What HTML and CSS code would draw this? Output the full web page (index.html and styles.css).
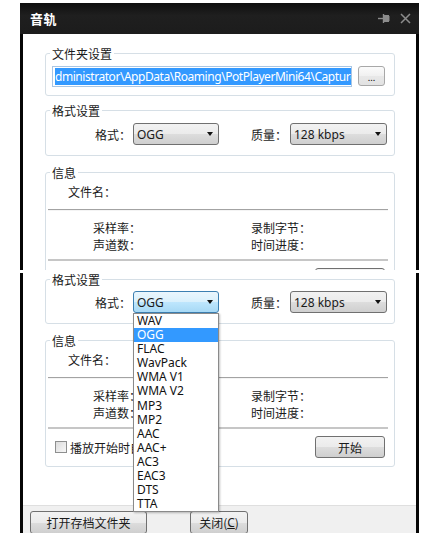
FILE: index.html
```html
<!DOCTYPE html>
<html lang="zh-CN">
<head>
<meta charset="utf-8">
<title>音轨</title>
<link rel="stylesheet" href="styles.css">
</head>
<body>
<div class="frame">
  <section class="panel panel-top">
    <header class="titlebar">
      <span class="title">音轨</span>
      <span class="tb-icons">
        <svg class="ic-pin" width="13" height="11" viewBox="0 0 13 11"><path d="M0 5.5H5" stroke="#8c8c8c" stroke-width="1.4"/><path d="M5.5 1V10" stroke="#8c8c8c" stroke-width="1.4"/><rect x="6" y="2" width="5" height="7" fill="#8c8c8c"/><path d="M11 3V8" stroke="#8c8c8c" stroke-width="1"/></svg>
        <svg class="ic-x" width="11" height="11" viewBox="0 0 11 11"><path d="M1 1L10 10M10 1L1 10" stroke="#8c8c8c" stroke-width="1.5"/></svg>
      </span>
    </header>
    <div class="body">
      <div class="group g-folder">
        <div class="legend">文件夹设置</div>
        <div class="path-row">
          <div class="path-input"><span class="sel">dministrator\AppData\Roaming\PotPlayerMini64\Capture</span></div>
          <div class="btn btn-dots">...</div>
        </div>
      </div>
      <div class="group g-format">
        <div class="legend">格式设置</div>
        <div class="combo-row">
          <span class="lbl">格式：</span>
          <div class="combo combo-fmt"><span>OGG</span><i class="arrow"></i></div>
          <span class="lbl lbl-q">质量：</span>
          <div class="combo combo-q"><span>128 kbps</span><i class="arrow"></i></div>
        </div>
      </div>
      <div class="group g-info">
        <div class="legend">信息</div>
        <div class="file-row">文件名：</div>
        <div class="sep sep1"></div>
        <div class="stats">
          <span>采样率：</span><span>录制字节：</span>
          <span>声道数：</span><span>时间进度：</span>
        </div>
        <div class="sep sep2"></div>
        <div class="start-row">
          <label class="chk"><i class="box"></i><span>播放开始时自动录制</span></label>
          <div class="btn btn-start">开始</div>
        </div>
      </div>
    </div>
  </section>

  <section class="panel panel-bottom">
    <div class="group g-format g-format2">
      <div class="legend">格式设置</div>
      <div class="combo-row">
        <span class="lbl">格式：</span>
        <div class="combo-wrap">
          <div class="combo combo-fmt focused"><span>OGG</span><i class="arrow"></i></div>
          <ul class="dropdown">
            <li>WAV</li>
            <li class="hl">OGG</li>
            <li>FLAC</li>
            <li>WavPack</li>
            <li>WMA V1</li>
            <li>WMA V2</li>
            <li>MP3</li>
            <li>MP2</li>
            <li>AAC</li>
            <li>AAC+</li>
            <li>AC3</li>
            <li>EAC3</li>
            <li>DTS</li>
            <li>TTA</li>
          </ul>
        </div>
        <span class="lbl lbl-q">质量：</span>
        <div class="combo combo-q"><span>128 kbps</span><i class="arrow"></i></div>
      </div>
    </div>
    <div class="group g-info">
      <div class="legend">信息</div>
      <div class="file-row">文件名：</div>
      <div class="sep sep1"></div>
      <div class="stats">
        <span>采样率：</span><span>录制字节：</span>
        <span>声道数：</span><span>时间进度：</span>
      </div>
      <div class="sep sep2"></div>
      <div class="start-row">
        <label class="chk"><i class="box"></i><span>播放开始时自动录制</span></label>
        <div class="btn btn-start">开始</div>
      </div>
    </div>
    <footer class="footer">
      <div class="btn btn-open">打开存档文件夹</div>
      <div class="btn btn-close">关闭(<u>C</u>)</div>
    </footer>
  </section>
</div>
</body>
</html>
```

FILE: styles.css
```css
* { box-sizing: border-box; }
html, body { margin: 0; padding: 0; background: #fff; }
body { width: 424px; height: 533px; overflow: hidden; }

.frame {
  margin-left: 20px;
  width: 399px;
  font-family: "Noto Sans", "Noto Sans CJK SC", sans-serif;
  font-size: 12px;
  color: #1a1a1a;
}

.panel { overflow: hidden; background: #fff; }
.panel-top { margin-top: 3px; height: 267px; display: flex; flex-direction: column; }
.panel-bottom {
  margin-top: 3px;
  height: 260px;
  position: relative;
  border-left: 3px solid #060606;
  border-right: 3px solid #060606;
}

.titlebar {
  height: 31px;
  flex: none;
  background: linear-gradient(#0e0e0e, #1f1f1f 40%, #1c1c1c);
  display: flex;
  align-items: center;
  justify-content: space-between;
  padding: 0 8px 0 10px;
}
.title { color: #fff; font-weight: bold; font-size: 13px; font-family: "Noto Sans CJK SC", sans-serif; letter-spacing: 0.5px; }
.tb-icons { display: flex; align-items: center; gap: 9px; }

.body {
  flex: 1;
  border-left: 3px solid #060606;
  border-right: 3px solid #060606;
  background: #fff;
}

.group {
  border: 1px solid #d6dfe6;
  border-radius: 3px;
  margin: 0 21px 0 22px;
}
.legend {
  display: table;
  margin: -8px 0 0 4px;
  padding: 0 2px;
  background: #fff;
  line-height: 16px;
  font-family: "Noto Sans CJK SC", sans-serif;
}

.g-folder { margin-top: 19px; }
.path-row { display: flex; margin: 4px 0 8px 6px; }
.path-input {
  width: 300px;
  height: 21px;
  border: 1px solid #a9c6e4;
  padding: 1px 2px;
  overflow: hidden;
  white-space: nowrap;
  background: #fff;
}
.sel {
  display: inline-block;
  background: #3399ff;
  color: #fff;
  font-size: 12px;
  line-height: 17px;
  letter-spacing: -0.45px;
}

.btn {
  border: 1px solid #707070;
  border-radius: 3px;
  background: linear-gradient(#f2f2f2 0%, #ebebeb 50%, #dddddd 51%, #cfcfcf 100%);
  display: flex;
  align-items: center;
  justify-content: center;
  font-family: "Noto Sans CJK SC", sans-serif;
  color: #1a1a1a;
}
.btn-dots {
  margin-left: 6px;
  width: 27px;
  height: 20px;
  border-color: #a8a8a8;
  background: linear-gradient(#fbfbfb, #f0f0f0 50%, #e8e8e8 51%, #e2e2e2);
  font-size: 9px;
  line-height: 1;
  padding-top: 2px;
}

.g-format { margin-top: 14px; }
.combo-row { display: flex; align-items: center; margin: 4px 0 10px 49px; }
.lbl { width: 36px; font-family: "Noto Sans CJK SC", sans-serif; white-space: nowrap; }
.lbl-q { margin-left: 32px; }
.combo {
  height: 22px;
  border: 1px solid #707070;
  border-radius: 3px;
  background: linear-gradient(#f2f2f2 0%, #ebebeb 50%, #dddddd 51%, #cfcfcf 100%);
  display: flex;
  align-items: center;
  justify-content: space-between;
  padding: 0 5px 0 3px;
  font-size: 12px;
}
.combo-fmt { width: 86px; margin-left: 2px; }
.combo-q { width: 97px; margin-left: 3px; }
.arrow {
  width: 0; height: 0;
  border-left: 3.5px solid transparent;
  border-right: 3.5px solid transparent;
  border-top: 4px solid #111;
}
.combo.focused {
  border-color: #3c7fb1;
  background: linear-gradient(#eaf6fd 0%, #d9f0fc 50%, #bee6fd 51%, #a7d9f5 100%);
}

.g-info { margin-top: 16px; }
.file-row { margin: 3px 0 0 22px; line-height: 16px; font-family: "Noto Sans CJK SC", sans-serif; }
.sep { margin: 0 6px 0 2px; height: 2px; }
.sep1 { margin-top: 9px; border-top: 1px solid #a3a3a3; border-bottom: 1px solid #f4f4f4; }
.sep2 { margin-top: 6px; background: #c6c6c6; }
.stats {
  display: grid;
  grid-template-columns: 158px auto;
  margin: 8px 0 0 47px;
  line-height: 17px;
  font-family: "Noto Sans CJK SC", sans-serif;
}
.start-row {
  display: flex;
  align-items: center;
  justify-content: space-between;
  margin: 7px 9px 8px 9px;
}
.chk { display: flex; align-items: center; font-family: "Noto Sans CJK SC", sans-serif; }
.box {
  width: 12px; height: 12px;
  border: 1px solid #8e8f8f;
  background: linear-gradient(135deg, #dcdcdc, #f7f7f7);
  margin-right: 3px;
}
.btn-start { width: 70px; height: 22px; }

.g-format2 { margin-top: 6px; }
.g-format2 .combo-row { margin-top: 3px; }
.combo-wrap { position: relative; }
.dropdown {
  position: absolute;
  top: 100%;
  left: 2px;
  width: 86px;
  margin: 0;
  padding: 0;
  list-style: none;
  background: #fff;
  border: 1px solid #8a8a8a;
  box-shadow: 1px 1px 2px rgba(0,0,0,0.25);
  z-index: 5;
}
.dropdown li {
  height: 14.1px;
  line-height: 14.1px;
  padding-left: 3px;
  font-size: 12px;
  color: #111;
}
.dropdown li.hl { background: #3399ff; color: #fff; }

.footer {
  margin-top: 38px;
  background: #f0f0f0;
  border-top: 1px solid #dfdfdf;
  height: 40px;
  display: flex;
  gap: 43px;
  padding: 5px 0 0 7px;
}
.btn-open { width: 117px; height: 23px; }
.btn-close { width: 58px; height: 23px; }
.btn-close u { font-family: "Noto Sans", sans-serif; }
```
